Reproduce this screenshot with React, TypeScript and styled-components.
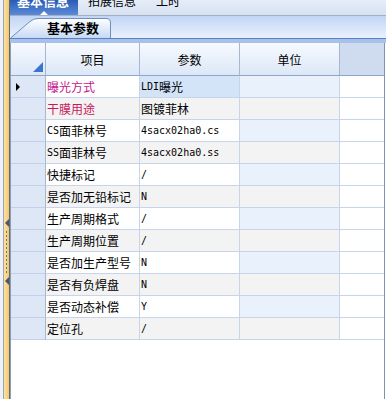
import React, { FC } from "react";
import styled, { createGlobalStyle } from "styled-components";

const GlobalStyle = createGlobalStyle`
  html, body {
    margin: 0;
    padding: 0;
    background: #ffffff;
    overflow: hidden;
  }
  body {
    font-family: "Noto Sans CJK SC", "DejaVu Sans", sans-serif;
    font-size: 12px;
    color: #000000;
  }
`;

const Page = styled.div`
  display: flex;
  height: 399px;
  width: 386px;
`;

const LeftEdge = styled.div`
  width: 3px;
  background: #eef1f6;
`;

const Splitter = styled.div`
  width: 5px;
  border-left: 1px solid #9aa6b8;
  border-right: 1px solid #5d6b82;
  background: linear-gradient(90deg, #fbe2a6, #f6c866);
  display: flex;
  flex-direction: column;
  align-items: center;
  padding-top: 219px;
  gap: 4px;
`;

const SplitArrow = styled.div`
  width: 0;
  height: 0;
  border-top: 4px solid transparent;
  border-bottom: 4px solid transparent;
  border-right: 4px solid #4b5668;
`;

const SplitDots = styled.div`
  width: 1px;
  height: 42px;
  background: repeating-linear-gradient(180deg, #6b7688 0 2px, transparent 2px 4px);
`;

const Main = styled.div`
  flex: 1;
  display: flex;
  flex-direction: column;
  min-width: 0;
`;

const TopTabs = styled.div`
  height: 15px;
  display: flex;
  background: linear-gradient(180deg, #e6edf8, #d6e1f1);
  border-bottom: 1px solid #a6afbd;
`;

const TopTab = styled.div<{ $active?: boolean }>`
  position: relative;
  height: 15px;
  overflow: hidden;
  padding: 0 ${(p) => (p.$active ? "10px 0 7px" : "10px")};
  width: ${(p) => (p.$active ? "51px" : "auto")};
  background: ${(p) =>
    p.$active ? "linear-gradient(180deg, #2a5bb4, #5a8ad8)" : "transparent"};
  color: ${(p) => (p.$active ? "#ffffff" : "#000000")};
  font-weight: ${(p) => (p.$active ? 700 : 400)};
  font-size: ${(p) => (p.$active ? "13px" : "12px")};
  white-space: nowrap;

  &::after {
    content: "";
    display: ${(p) => (p.$active ? "block" : "none")};
    position: absolute;
    left: 30px;
    bottom: 0;
    border-left: 4px solid transparent;
    border-right: 4px solid transparent;
    border-bottom: 4px solid #ffffff;
  }
`;

const TopTabLabel = styled.div`
  margin-top: -6px;
  line-height: 14px;
`;

const SubTabStrip = styled.div`
  height: 22px;
  display: flex;
  align-items: flex-end;
  background: linear-gradient(180deg, #c2d5f4, #eaf1fd);
  border-bottom: 1px solid #5a82c3;
`;

const SubTab = styled.div`
  position: relative;
  width: 101px;
  height: 20px;
`;

const SubTabShape = styled.svg`
  position: absolute;
  left: 0;
  top: 0;
`;

const SubTabLabel = styled.div`
  position: relative;
  padding-left: 37px;
  line-height: 20px;
  font-size: 13px;
  font-weight: 700;
`;

const Band = styled.div`
  height: 4px;
  background: #a7c1ea;
`;

const Grid = styled.div`
  flex: 1;
  display: grid;
  grid-template-columns: 35px 94px 100px 100px 1fr;
  grid-auto-rows: 22px;
  grid-template-rows: 33px;
  align-content: start;
  border-left: 1px solid #8c9db8;
  border-right: 1px solid #8292ad;
  margin-right: 1px;
  background: #ffffff;
`;

const HeadCell = styled.div<{ $filler?: boolean }>`
  position: relative;
  display: flex;
  align-items: center;
  justify-content: center;
  background: ${(p) =>
    p.$filler ? "#cfdcef" : "linear-gradient(180deg, #f7faff, #dce7f7)"};
  border-right: ${(p) => (p.$filler ? "none" : "1px solid #a6b7d0")};
  border-bottom: 1px solid #8ea6cb;
  font-size: 12px;
`;

const CornerMark = styled.div`
  position: absolute;
  right: 2px;
  bottom: 3px;
  width: 0;
  height: 0;
  border-left: 10px solid transparent;
  border-bottom: 10px solid #3a76d0;
`;

const RowHead = styled.div`
  display: flex;
  align-items: center;
  padding-left: 5px;
  background: #dde7f5;
  border-right: 1px solid #a6b7d0;
  border-bottom: 1px solid #c3d1e8;
`;

const RowPointer = styled.div`
  width: 0;
  height: 0;
  border-top: 4px solid transparent;
  border-bottom: 4px solid transparent;
  border-left: 4px solid #000000;
`;

type Tone = "plain" | "alt" | "unit" | "focus" | "filler";

const toneColor: Record<Tone, string> = {
  plain: "#ffffff",
  alt: "#f3f3f3",
  unit: "#e9f1fc",
  focus: "#d3e3f8",
  filler: "#ffffff",
};

const Cell = styled.div<{ $tone: Tone; $color?: string }>`
  display: flex;
  align-items: center;
  padding-left: 1px;
  overflow: hidden;
  white-space: nowrap;
  background: ${(p) => toneColor[p.$tone]};
  color: ${(p) => p.$color || "#000000"};
  border-right: ${(p) => (p.$tone === "filler" ? "none" : "1px solid #c7d4e9")};
  border-bottom: 1px solid #c7d4e9;
  font-size: 12px;
`;

const Latin = styled.span`
  font-family: "DejaVu Sans Mono", "Liberation Mono", monospace;
  font-size: 10px;
`;

type Row = { item: string; value: string; color?: string };

const rows: Row[] = [
  { item: "曝光方式", value: "LDI曝光", color: "#c4178c" },
  { item: "干膜用途", value: "图镀菲林", color: "#c8195e" },
  { item: "CS面菲林号", value: "4sacx02ha0.cs" },
  { item: "SS面菲林号", value: "4sacx02ha0.ss" },
  { item: "快捷标记", value: "/" },
  { item: "是否加无铅标记", value: "N" },
  { item: "生产周期格式", value: "/" },
  { item: "生产周期位置", value: "/" },
  { item: "是否加生产型号", value: "N" },
  { item: "是否有负焊盘", value: "N" },
  { item: "是否动态补偿", value: "Y" },
  { item: "定位孔", value: "/" },
];

const renderText = (s: string) =>
  s.split(/([\x20-\x7e]+)/).map((part, i) =>
    /^[\x20-\x7e]+$/.test(part) ? <Latin key={i}>{part}</Latin> : part
  );

const App: FC = () => {
  return (
    <Page>
      <GlobalStyle />
      <LeftEdge />
      <Splitter>
        <SplitArrow />
        <SplitDots />
        <SplitArrow />
      </Splitter>
      <Main>
        <TopTabs>
          <TopTab $active>
            <TopTabLabel>基本信息</TopTabLabel>
          </TopTab>
          <TopTab>
            <TopTabLabel>拍展信息</TopTabLabel>
          </TopTab>
          <TopTab>
            <TopTabLabel>工时</TopTabLabel>
          </TopTab>
        </TopTabs>
        <SubTabStrip>
          <SubTab>
            <SubTabShape width="101" height="20" viewBox="0 0 101 20">
              <defs>
                <linearGradient id="subTabFill" x1="0" y1="0" x2="0" y2="1">
                  <stop offset="0" stopColor="#ffffff" />
                  <stop offset="1" stopColor="#c6d9f5" />
                </linearGradient>
              </defs>
              <path
                d="M0.5 20 L20 3.5 Q23.5 0.5 28 0.5 L96 0.5 Q100.5 0.5 100.5 5 L100.5 20"
                fill="url(#subTabFill)"
                stroke="#6f8dbf"
                strokeWidth="1"
              />
            </SubTabShape>
            <SubTabLabel>基本参数</SubTabLabel>
          </SubTab>
        </SubTabStrip>
        <Band />
        <Grid>
          <HeadCell>
            <CornerMark />
          </HeadCell>
          <HeadCell>项目</HeadCell>
          <HeadCell>参数</HeadCell>
          <HeadCell>单位</HeadCell>
          <HeadCell $filler />
          {rows.map((r, i) => {
            const alt = i % 2 === 1;
            const base: Tone = alt ? "alt" : "plain";
            return (
              <React.Fragment key={r.item}>
                <RowHead>{i === 0 && <RowPointer />}</RowHead>
                <Cell $tone={base} $color={r.color}>
                  {renderText(r.item)}
                </Cell>
                <Cell $tone={i === 0 ? "focus" : base}>{renderText(r.value)}</Cell>
                <Cell $tone={alt ? "alt" : "unit"} />
                <Cell $tone="filler" />
              </React.Fragment>
            );
          })}
        </Grid>
      </Main>
    </Page>
  );
};

export default App;
